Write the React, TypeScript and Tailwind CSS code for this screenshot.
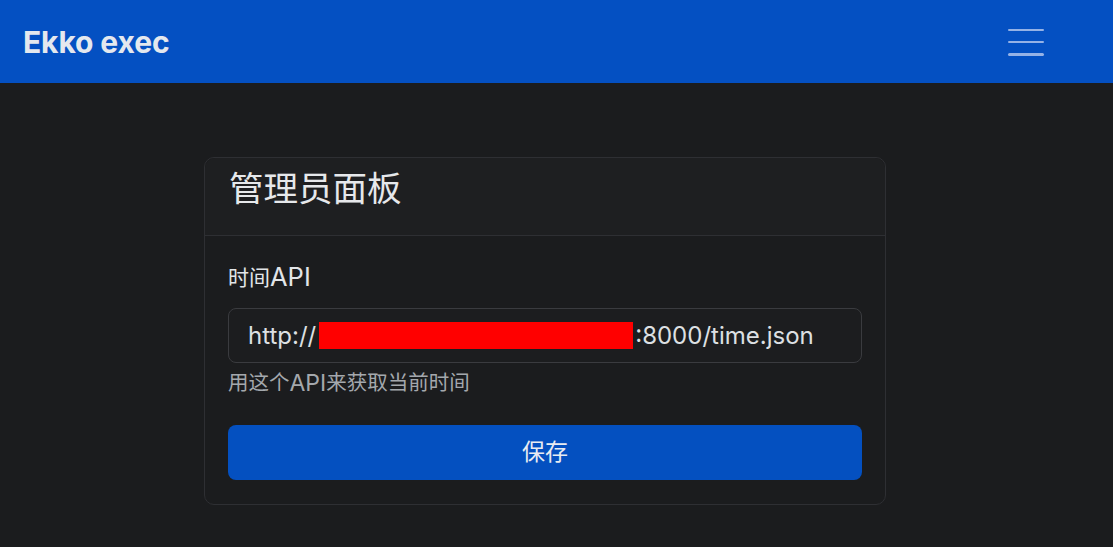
export default function App() {
  const font = { fontFamily: 'Inter, "Noto Sans CJK SC", sans-serif' };
  return (
    <div className="min-h-[547px] bg-[#1b1c1e] text-[#dee2e6]" style={font}>
      <nav className="h-[83px] bg-[#0450c2] flex items-center justify-between pl-[23px] pr-[69px]">
        <span className="text-[30px] leading-[36px] font-bold text-[#e4e8ee] tracking-[-0.1px] mt-[1px]">Ekko exec</span>
        <button className="w-[36px] h-[27px] flex flex-col justify-between mt-[1px]">
          <span className="block h-[2.5px] bg-[#95b2e6] rounded"></span>
          <span className="block h-[2.5px] bg-[#95b2e6] rounded"></span>
          <span className="block h-[2.5px] bg-[#95b2e6] rounded"></span>
        </button>
      </nav>
      <div className="flex justify-center pt-[74px] pr-[23px]">
        <div className="w-[682px] border border-[#2e2f33] rounded-[10px] bg-[#1b1c1e]">
          <div className="h-[78px] border-b border-[#2e2f33] bg-[#1e1f21] rounded-t-[10px] px-[24px] pt-[10px]">
            <h3 className="text-[34.5px] leading-[41px] text-[#e6e8eb]">管理员面板</h3>
          </div>
          <div className="px-[23px] pt-[26px] pb-[24px]">
            <div className="h-[31px] flex items-center text-[21px] text-[#e2e5e8]">时间<span className="text-[25.5px]">API</span></div>
            <div className="mt-[15px] h-[55px] border border-[#3a3b3f] rounded-[8px] bg-[#1c1d1f] flex items-center pl-[19px] text-[24px] text-[#dde0e3]">
              <span>http://</span>
              <span className="inline-block w-[314px] h-[27px] bg-[#ff0000] ml-[3px] mr-[2px]"></span>
              <span>:8000/time.json</span>
            </div>
            <div className="mt-[5px] h-[31px] flex items-center text-[20.5px] text-[#a4a8ad]">用这个<span className="text-[23px]">API</span>来获取当前时间</div>
            <button className="mt-[26px] w-full h-[55px] rounded-[8px] bg-[#0450c0] text-[23px] text-[#e8ecf2]">保存</button>
          </div>
        </div>
      </div>
    </div>
  );
}
